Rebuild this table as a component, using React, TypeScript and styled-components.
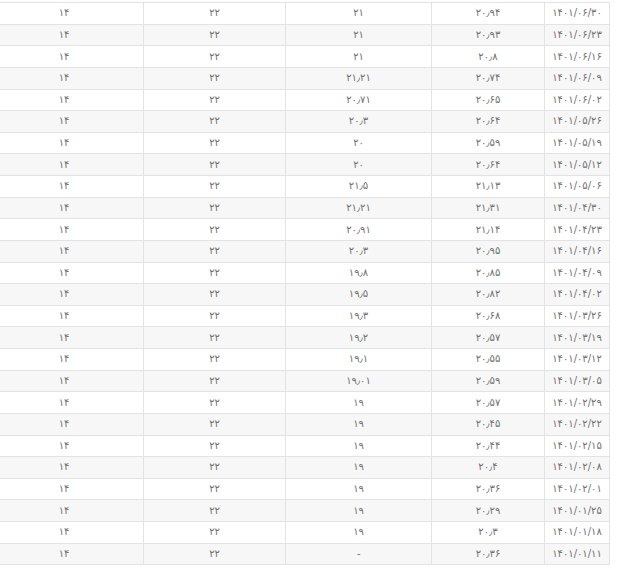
import React from "react";
import styled, { createGlobalStyle } from "styled-components";

const GlobalStyle = createGlobalStyle`
  html, body {
    margin: 0;
    padding: 0;
    background: #ffffff;
  }
  body {
    font-family: "DejaVu Sans", "Liberation Sans", sans-serif;
  }
`

const Page = styled.div`
  width: 620px;
  height: 576px;
  overflow: hidden;
  direction: rtl;
  padding: 2px 10px 0 0;
  box-sizing: border-box;
  background: #fff;
`

const Table = styled.table`
  border-collapse: collapse;
  table-layout: fixed;
  width: 620px;
`

const Row = styled.tr<{ $striped: boolean }>`
  height: 21.63px;
  background: ${p => (p.$striped ? "#f7f7f7" : "#ffffff")};
`

const Cell = styled.td<{ $w: number }>`
  width: ${p => p.$w}px;
  padding: 0;
  border: 1px solid #e3e3e3;
  text-align: center;
  vertical-align: middle;
  font-size: 10px;
  letter-spacing: -0.4px;
  color: #707070;
  line-height: 1;
  white-space: nowrap;
`

const widths = [64, 112, 145, 141, 158];

const rows: string[][] = [
  ["1401/06/30", "20.94", "21"],
  ["1401/06/23", "20.93", "21"],
  ["1401/06/16", "20.8", "21"],
  ["1401/06/09", "20.74", "21.21"],
  ["1401/06/02", "20.65", "20.71"],
  ["1401/05/26", "20.64", "20.3"],
  ["1401/05/19", "20.59", "20"],
  ["1401/05/12", "20.64", "20"],
  ["1401/05/06", "21.13", "21.5"],
  ["1401/04/30", "21.31", "21.21"],
  ["1401/04/23", "21.14", "20.91"],
  ["1401/04/16", "20.95", "20.3"],
  ["1401/04/09", "20.85", "19.8"],
  ["1401/04/02", "20.82", "19.5"],
  ["1401/03/26", "20.68", "19.3"],
  ["1401/03/19", "20.57", "19.2"],
  ["1401/03/12", "20.55", "19.1"],
  ["1401/03/05", "20.59", "19.01"],
  ["1401/02/29", "20.57", "19"],
  ["1401/02/22", "20.45", "19"],
  ["1401/02/15", "20.44", "19"],
  ["1401/02/08", "20.4", "19"],
  ["1401/02/01", "20.36", "19"],
  ["1401/01/25", "20.29", "19"],
  ["1401/01/18", "20.3", "19"],
  ["1401/01/11", "20.36", "-"],
];

const fa = "۰۱۲۳۴۵۶۷۸۹";
const toFa = (s: string) =>
  s.replace(/[0-9]/g, d => fa[+d]).replace(/\./g, "٫");

export default function App() {
  return (
    <>
      <GlobalStyle />
      <Page>
        <Table>
          <tbody>
            {rows.map((r, i) => (
              <Row key={r[0]} $striped={i % 2 === 1}>
                {[...r, "22", "14"].map((v, j) => (
                  <Cell key={j} $w={widths[j]}>{toFa(v)}</Cell>
                ))}
              </Row>
            ))}
          </tbody>
        </Table>
      </Page>
    </>
  );
}
